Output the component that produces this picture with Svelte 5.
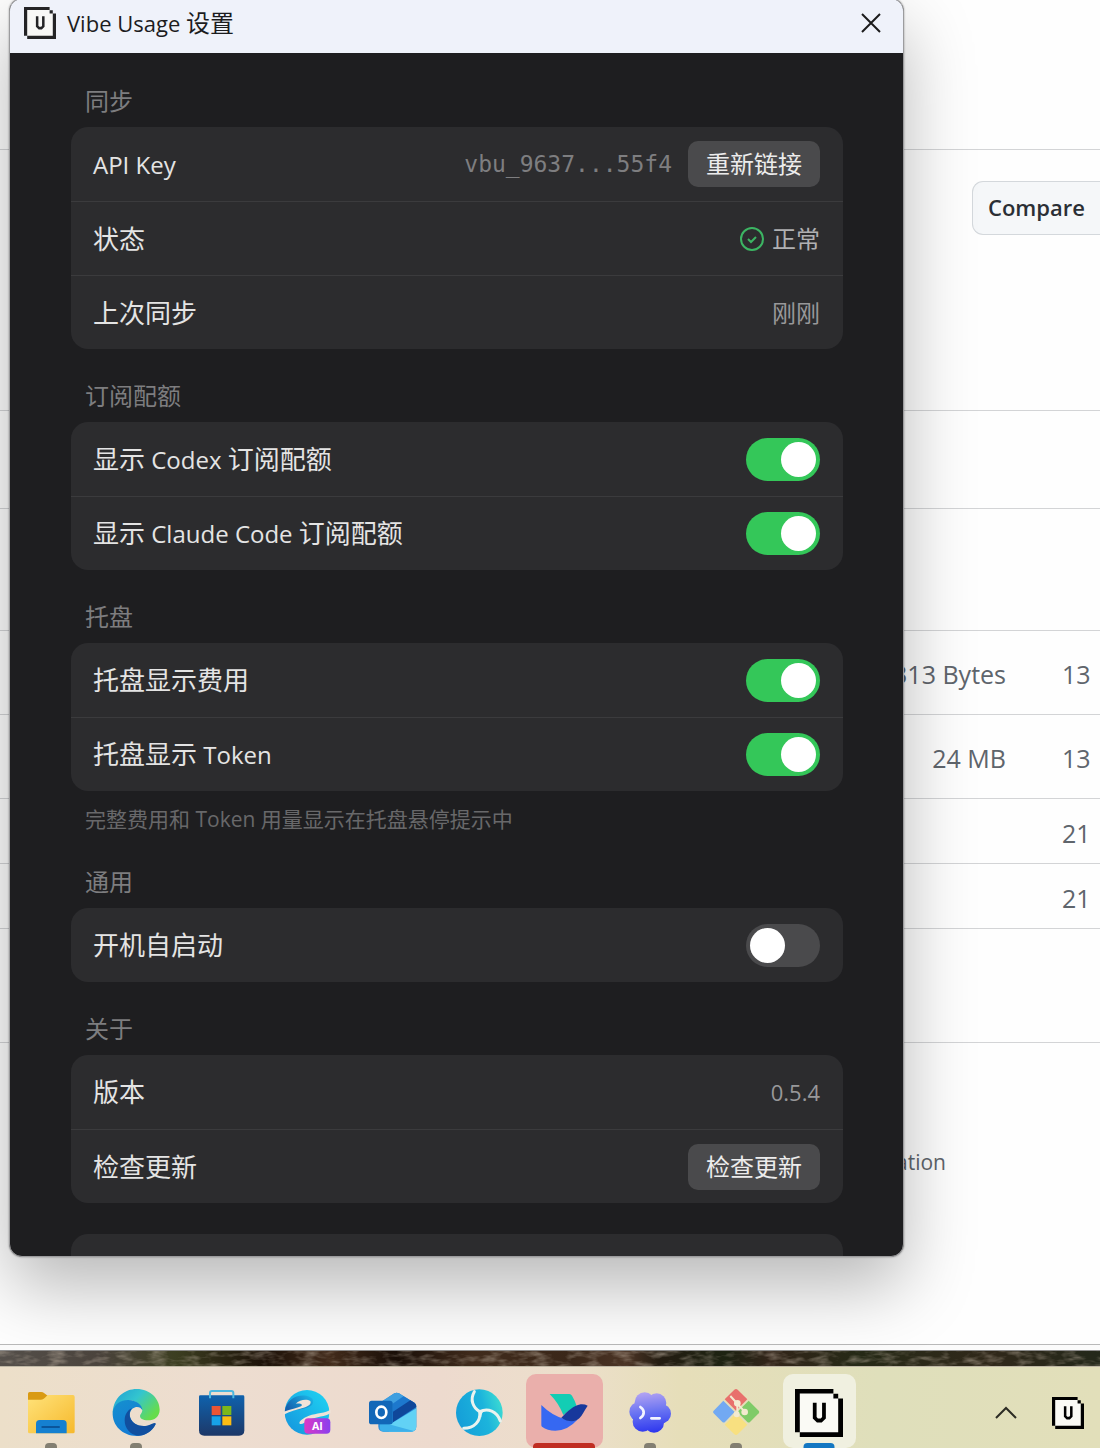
<script>
  const groups = [
    {
      title: '同步',
      rows: [
        { label: 'API Key', kind: 'key', value: 'vbu_9637...55f4', action: '重新链接' },
        { label: '状态', kind: 'status', value: '正常' },
        { label: '上次同步', kind: 'text', value: '刚刚' },
      ],
    },
    {
      title: '订阅配额',
      rows: [
        { label: '显示 Codex 订阅配额', kind: 'toggle', on: true },
        { label: '显示 Claude Code 订阅配额', kind: 'toggle', on: true },
      ],
    },
    {
      title: '托盘',
      rows: [
        { label: '托盘显示费用', kind: 'toggle', on: true },
        { label: '托盘显示 Token', kind: 'toggle', on: true },
      ],
      hint: '完整费用和 Token 用量显示在托盘悬停提示中',
    },
    { title: '通用', rows: [{ label: '开机自启动', kind: 'toggle', on: false }] },
    {
      title: '关于',
      rows: [
        { label: '版本', kind: 'text', value: '0.5.4' },
        { label: '检查更新', kind: 'action', action: '检查更新' },
      ],
    },
  ];

  // Latin words are set slightly smaller than the Chinese around them.
  const runs = (text) =>
    text
      .split(/([\x20-\x7e]+)/)
      .filter(Boolean)
      .map((t) => ({ t, latin: /^[\x20-\x7e]+$/.test(t) }));
</script>

{#snippet mixed(text)}{#each runs(text) as r}<span class:latin={r.latin}>{r.t}</span>{/each}{/snippet}

{#snippet vibe()}
  <svg class="vibe" viewBox="0 0 140 140" aria-hidden="true">
    <path d="M10 10H112V26H126V130H14z" fill="#fafaf5" />
    <path d="M0 0H112V13H14V126H0zM112 14H126V28H112zM126 28H140V140H14V126H126z" />
    <path d="M52 40H63V82L67 86H75L79 82V40H90V86L78 98H64L52 86z" />
  </svg>
{/snippet}

<div class="desktop">
  <main class="page">
    <div class="band b1"></div>
    <div class="band b2"><button class="compare">Compare</button></div>
    <div class="band b3"></div>
    <div class="band b4"></div>
    <div class="band asset"><span>313 Bytes</span><span>13</span></div>
    <div class="band asset"><span>24 MB</span><span>13</span></div>
    <div class="band asset short"><span></span><span>21</span></div>
    <div class="band asset short"><span></span><span>21</span></div>
    <div class="band b5"></div>
    <div class="foot"><span>ation</span></div>
  </main>
  <div class="frame"></div>
  <div class="wallpaper">
    <svg width="100%" height="100%" aria-hidden="true">
      <filter id="grain" x="0" y="0" width="100%" height="100%">
        <feTurbulence type="fractalNoise" baseFrequency="0.06 0.16" numOctaves="3" seed="4" />
        <feColorMatrix values="0 0 0 0 .55  0 0 0 0 .47  0 0 0 0 .38  2.2 0 0 0 -.95" />
      </filter>
      <rect width="100%" height="100%" filter="url(#grain)" />
    </svg>
  </div>

  <nav class="taskbar" aria-label="taskbar">
    <div class="apps">
      <button class="app run" aria-label="File Explorer">
        <svg viewBox="0 0 144 144">
          <defs><linearGradient id="fo" x1="0" y1="0" x2="1" y2="1"><stop offset="0" stop-color="#ffe27a" /><stop offset="1" stop-color="#f6b92c" /></linearGradient></defs>
          <path d="M3 14Q3 9 8 9H42Q48 9 52 13L62 20V34H3z" fill="#d99a13" />
          <path d="M3 32H42Q48 32 53 27L60 20Q62 18 66 18H138Q143 18 143 24V128Q143 133 138 133H8Q3 133 3 128z" fill="url(#fo)" />
          <path d="M27 133V104Q27 93 38 93H108Q119 93 119 104V133z" fill="#1580d0" />
          <path d="M46 114H96" stroke="#0a559b" stroke-width="6" stroke-linecap="round" />
        </svg>
      </button>
      <button class="app run" aria-label="Edge">
        <svg viewBox="0 0 144 144">
          <defs>
            <linearGradient id="e1" x1="0" y1="0" x2="1" y2=".6"><stop offset="0" stop-color="#1f9fd4" /><stop offset=".5" stop-color="#33c5cf" /><stop offset="1" stop-color="#66dc4c" /></linearGradient>
            <linearGradient id="e2" x1="0" y1="0" x2=".6" y2="1"><stop offset="0" stop-color="#1590cf" /><stop offset="1" stop-color="#1378d4" /></linearGradient>
          </defs>
          <path d="M2 70C5 25 38 0 74 0C115 0 143 30 143 62C143 83 127 94 108 94C92 94 84 88 84 81C84 76 91 72 91 64C88 48 70 30 46 34Z" fill="url(#e1)" />
          <path d="M2 70C6 44 28 32 50 33C74 34 91 48 91 64C88 56 80 53 72 54C56 58 51 72 55 86C62 106 84 116 104 112C116 110 126 102 131 106C119 128 98 141 74 141C32 141 0 110 2 70Z" fill="url(#e2)" />
          <path d="M60 57C51 68 51 82 58 93C68 108 88 113 104 110C116 107 125 101 130 102Q132 103 130 107C120 127 99 140 78 140C54 137 38 118 38 94C38 77 46 64 60 57Z" fill="#114f9f" />
        </svg>
      </button>
      <button class="app" aria-label="Store">
        <svg viewBox="0 0 144 144">
          <defs><linearGradient id="st" x1="0" y1="0" x2="0" y2="1"><stop offset="0" stop-color="#0f62ad" /><stop offset="1" stop-color="#1d3868" /></linearGradient></defs>
          <path d="M3 23Q3 19 7 19H135Q139 19 139 23V124Q139 140 123 140H19Q3 140 3 124z" fill="url(#st)" />
          <path d="M36 28V12Q36 6 42 6H100Q106 6 106 12V28" fill="none" stroke="#4cb8e0" stroke-width="6" />
          <path d="M41 51H68V78H41z" fill="#ea5534" /><path d="M73 51H100V78H73z" fill="#7db71b" />
          <path d="M41 82H68V109H41z" fill="#17a2e8" /><path d="M73 82H100V109H73z" fill="#fdbc12" />
        </svg>
      </button>
      <button class="app" aria-label="AI browser">
        <svg viewBox="0 0 144 144">
          <defs><linearGradient id="ai" x1="0" y1="1" x2="1" y2="0"><stop offset="0" stop-color="#1592dc" /><stop offset="1" stop-color="#1fd6f4" /></linearGradient>
          <linearGradient id="ad" x1="0" y1=".6" x2="1" y2="0"><stop offset="0" stop-color="#1461ae" /><stop offset="1" stop-color="#1cbcec" /></linearGradient>
          <linearGradient id="ab"><stop offset="0" stop-color="#dd38c6" /><stop offset="1" stop-color="#8940ee" /></linearGradient></defs>
          <circle cx="72" cy="70" r="67" fill="url(#ai)" />
          <path d="M6 62C12 34 36 16 70 20C92 24 96 40 84 50C62 64 30 60 6 70Z" fill="url(#ad)" />
          <path d="M38 44C50 31 72 29 82 36C86 46 76 52 62 56C40 62 20 66 2 77V68C24 60 42 58 54 52C60 48 56 42 38 44Z" fill="#efe3d8" />
          <path d="M143 62C128 72 100 72 78 80C58 88 46 98 50 104C56 108 66 100 78 93C100 82 128 84 143 72Z" fill="#efe3d8" />
          <rect x="64" y="88" width="78" height="46" rx="12" fill="url(#ab)" />
          <text x="103" y="122" text-anchor="middle" font-size="32" font-weight="700" fill="#fff">AI</text>
        </svg>
      </button>
      <button class="app" aria-label="Outlook">
        <svg viewBox="0 0 144 144">
          <path d="M28 44L76 13Q83 9 90 13L136 41Q142 45 142 52V112Q142 128 126 128H44Q28 128 28 112z" fill="#2788d8" />
          <path d="M28 44L76 13Q83 9 90 13L104 22L48 60H28z" fill="#3f9fe0" />
          <path d="M104 22L136 41Q142 45 142 50L72 96V44z" fill="#1d78cd" />
          <path d="M124 34L136 41Q142 45 142 54L72 100V68z" fill="#0f479a" />
          <path d="M142 58V112Q142 128 126 128H60L56 110z" fill="#62d2f5" />
          <path d="M60 106L134 126Q130 128 126 128H44Q36 128 32 120V106z" fill="#3db0ea" />
          <rect x="0" y="35" width="71" height="71" rx="8" fill="#1267b8" />
          <ellipse cx="37" cy="70" rx="15" ry="17" fill="none" stroke="#fff" stroke-width="8" />
        </svg>
      </button>
      <button class="app" aria-label="Browser">
        <svg viewBox="0 0 144 144">
          <defs><linearGradient id="sw" x1="0" y1=".6" x2="1" y2=".3"><stop offset="0" stop-color="#159ed8" /><stop offset=".6" stop-color="#1cb4dc" /><stop offset="1" stop-color="#3ddcd2" /></linearGradient></defs>
          <circle cx="73" cy="71" r="70" fill="url(#sw)" />
          <path d="M74 68C54 56 44 32 58 8M74 68C98 56 126 66 136 96M74 68C78 96 58 118 26 118" fill="none" stroke="#eaf3ef" stroke-width="9" stroke-linecap="round" />
          <path d="M62 58C70 64 80 64 90 62C82 68 79 76 79 86C75 74 70 66 62 58Z" fill="#eaf3ef" />
        </svg>
      </button>
      <button class="app pinned" aria-label="Feishu">
        <svg viewBox="0 0 144 144">
          <path d="M29 15H88Q93 15 96 20Q106 36 111 54Q90 60 70 78Q56 42 29 15z" fill="#13cdb4" />
          <path d="M4 48Q36 80 74 90Q92 98 112 92Q84 124 46 125Q22 125 6 113Q4 111 4 108z" fill="#3668f2" />
          <path d="M64 86C84 66 100 50 122 46Q134 45 143 50C132 66 128 78 118 88C104 102 82 98 64 86z" fill="#17389c" />
        </svg>
      </button>
      <button class="app run" aria-label="Terminal">
        <svg viewBox="0 0 144 144">
          <defs><linearGradient id="te" gradientUnits="userSpaceOnUse" x1="60" y1="8" x2="76" y2="134"><stop offset="0" stop-color="#b5a5f2" /><stop offset=".5" stop-color="#6671f2" /><stop offset="1" stop-color="#2b34ee" /></linearGradient></defs>
          <g fill="url(#te)"><circle cx="56" cy="40" r="30" /><circle cx="92" cy="42" r="29" /><circle cx="106" cy="74" r="29" /><circle cx="84" cy="101" r="30" /><circle cx="50" cy="98" r="30" /><circle cx="39" cy="68" r="29" /><circle cx="72" cy="71" r="50" /></g>
          <path d="M43 54Q54 62 53 70Q54 78 43 87M76 88H101" fill="none" stroke="#f2f4ff" stroke-width="8" stroke-linecap="round" />
        </svg>
      </button>
      <button class="app run" aria-label="Git">
        <svg viewBox="0 0 144 144">
          <path d="M67 2Q72-2 77 2L106 31L72 65L38 31z" fill="#e8706c" />
          <path d="M34 35L68 69L39 99Q35 102 31 99L5 73Q1 69 5 65z" fill="#72a9f2" />
          <path d="M110 35L140 65Q144 69 140 73L114 99Q110 102 106 99L76 69z" fill="#7fcb68" />
          <path d="M72 73L106 107L77 136Q72 140 67 136L38 107z" fill="#f8e080" />
          <path d="M55 21L98 68M76 44V78" fill="none" stroke="#f3ead0" stroke-width="6" />
          <circle cx="76" cy="43" r="10" fill="#f3ead0" /><circle cx="98" cy="69" r="10" fill="#f3ead0" /><circle cx="74" cy="76" r="9" fill="#f3ead0" />
        </svg>
      </button>
      <button class="app active" aria-label="Vibe Usage">{@render vibe()}</button>
    </div>
    <div class="tray">
      <button class="plain" aria-label="Show hidden icons">
        <svg class="chev" viewBox="0 0 22 14"><path d="M1 12L11 2L21 12" fill="none" stroke="#2c2c24" stroke-width="2" /></svg>
      </button>
      <button class="plain small" aria-label="Vibe Usage tray">{@render vibe()}</button>
    </div>
  </nav>

  <section class="window" aria-label="Vibe Usage 设置">
    <header>
      <div class="small logo">{@render vibe()}</div>
      <h1>{@render mixed('Vibe Usage 设置')}</h1>
      <button class="plain close" aria-label="Close">
        <svg viewBox="0 0 20 20"><path d="M1 1L19 19M19 1L1 19" stroke="#1b1b1b" stroke-width="2" fill="none" /></svg>
      </button>
    </header>
    <div class="body">
      {#each groups as g, gi}
        <section class="group">
          <h2>{g.title}</h2>
          <div class="card">
            {#each g.rows as row, ri}
              <div class="row">
                {#if row.kind === 'toggle'}
                  <label for={`t${gi}-${ri}`}>{@render mixed(row.label)}</label>
                  <input id={`t${gi}-${ri}`} type="checkbox" role="switch" checked={row.on} />
                {:else}
                  <span class="name">{@render mixed(row.label)}</span>
                  {#if row.kind === 'key'}<code>{row.value}</code>{/if}
                  {#if row.kind === 'status'}
                    <span class="value ok">
                      <svg viewBox="0 0 24 24" aria-hidden="true"><circle cx="12" cy="12" r="11" /><path d="M8 12L11 15L16 10" /></svg>
                      {row.value}
                    </span>
                  {/if}
                  {#if row.kind === 'text'}<span class="value">{@render mixed(row.value)}</span>{/if}
                  {#if row.action}<button class="btn">{row.action}</button>{/if}
                {/if}
              </div>
            {/each}
          </div>
          {#if g.hint}<p>{g.hint}</p>{/if}
        </section>
      {/each}
      <div class="card peek"></div>
    </div>
  </section>
</div>

<style>
  :global(body) {
    margin: 0;
    font-family: 'Open Sans', 'Noto Sans CJK SC', sans-serif;
  }
  .desktop {
    position: relative;
    display: flex;
    flex-direction: column;
    min-height: 100vh;
    overflow: hidden;
  }
  button {
    font: inherit;
    border: 0;
    cursor: pointer;
  }
  svg {
    display: block;
    flex: none;
  }

  .page {
    flex: 1;
    background: #fefefe;
    color: #5f656c;
    font-size: 25px;
  }
  .band {
    box-sizing: border-box;
    border-bottom: 1px solid #d3d4d6;
  }
  .b1 { height: 150px; }
  .b2 {
    height: 261px;
    padding-top: 31px;
    display: flex;
    justify-content: flex-end;
    align-items: flex-start;
  }
  .b3 { height: 98px; }
  .b4 { height: 122px; }
  .b5 { height: 114px; }
  .compare {
    width: 128px;
    height: 54px;
    padding: 0 0 2px 15px;
    text-align: left;
    font-size: 22px;
    font-weight: 600;
    color: #2b2f35;
    background: #f5f7f9;
    border: 1px solid #d4d8dc;
    border-right: 0;
    border-radius: 11px 0 0 11px;
  }
  .asset {
    height: 84px;
    display: grid;
    grid-template-columns: 1fr 38px;
    column-gap: 56px;
    align-items: center;
    padding-top: 3px;
  }
  .asset span:first-child { text-align: right; }
  .asset.short { height: 65px; }
  .foot {
    padding: 104px 154px 0 0;
    text-align: right;
    font-size: 21px;
    line-height: 30px;
  }
  .frame {
    height: 5px;
    background: #fbfbfb;
    border-top: 1px solid #b9b9b9;
    border-bottom: 1px solid #8c8c8c;
  }
  .wallpaper {
    height: 15px;
    background: linear-gradient(90deg, #55504b, #4b443d 9%, #3d3f22 16%, #1d1209 24%, #432c1c 30%, #1a0f08 36%, #412c1d 43%, #3b281a 52%, #4c3526 57%, #241d12 60%, #1e2413 66%, #33251a 70%, #262a17 78%, #30281a 90%, #23281a);
  }
  .wallpaper svg { opacity: 0.5; }

  .taskbar {
    display: flex;
    justify-content: space-between;
    height: 74px;
    padding: 7px 16px 0 12px;
    border-top: 1px solid #bfb8a6;
    background: linear-gradient(90deg, #ecdfc9, #edddd0 20%, #eddace 40%, #ecdfcb 52%, #e6deb9 62%, #dfdfbb 80%, #e2dfba);
  }
  .apps {
    flex: 1;
    display: flex;
    justify-content: space-between;
  }
  .app {
    width: 77px;
    height: 74px;
    padding: 4px 0 0;
    display: grid;
    place-items: center;
    position: relative;
    background: none;
    border-radius: 10px;
  }
  .app svg,
  .app :global(svg) {
    width: 48px;
    height: 48px;
  }
  .app text { font-family: 'Open Sans', sans-serif; }
  .app.run::after,
  .app.pinned::after,
  .app.active::after {
    content: '';
    position: absolute;
    bottom: 0;
    left: 50%;
    width: 12px;
    height: 5px;
    transform: translateX(-50%);
    border-radius: 4px 4px 0 0;
    background: #837f72;
  }
  .app.pinned { background: #eaafab; }
  .app.pinned::after { width: 62px; background: #c02d22; }
  .app.active { background: #f0f0e0; width: 73px; }
  .app.active::after { width: 31px; background: #1477c2; }
  .tray {
    width: 228px;
    height: 77px;
    display: flex;
    justify-content: flex-end;
    align-items: center;
    gap: 35px;
  }
  .plain {
    padding: 0;
    background: none;
  }
  .chev { width: 22px; height: 14px; }
  .small :global(svg) { width: 32px; height: 32px; }
  .logo :global(svg) { opacity: 0.85; }

  .window {
    position: absolute;
    top: -2px;
    left: 9px;
    right: 196px;
    border: 1px solid #9c9c9e;
    border-radius: 13px;
    overflow: hidden;
    background: #1e1e20;
    box-shadow: 0 0 2px rgba(0, 0, 0, 0.4), 0 30px 70px rgba(0, 0, 0, 0.28);
  }
  header {
    display: flex;
    align-items: center;
    height: 48px;
    padding: 0 22px 6px 14px;
    background: #eff2fa;
  }
  h1 {
    flex: 1;
    margin: 0 0 0 11px;
    font-size: 24px;
    line-height: 32px;
    font-weight: 400;
    color: #1c1c1e;
  }
  h1 .latin { font-size: 22px; }
  .close svg { width: 20px; height: 20px; }

  .body {
    padding: 32px 60px 0 61px;
    display: flex;
    flex-direction: column;
    gap: 31px;
  }
  h2 {
    margin: 0 0 10px 14px;
    font-size: 24px;
    line-height: 32px;
    font-weight: 400;
    color: #7d7d7f;
  }
  .card {
    border-radius: 17px;
    background: #2c2c2e;
  }
  .row {
    box-sizing: border-box;
    min-height: 74px;
    padding: 0 23px 0 22px;
    display: flex;
    align-items: center;
    font-size: 26px;
    line-height: 36px;
    color: #e4e4e4;
  }
  .row + .row { border-top: 1px solid #3b3b3d; }
  .row label,
  .name { flex: 1; }
  .row .latin { font-size: 24px; }
  .value {
    font-size: 24px;
    color: #98989a;
  }
  .row .value .latin { font-size: 22px; }
  .ok {
    display: flex;
    align-items: center;
    gap: 8px;
    color: #b0b0b2;
  }
  .ok svg {
    width: 24px;
    height: 24px;
    fill: none;
    stroke: #3cb563;
    stroke-width: 2;
  }
  code {
    margin-right: 16px;
    font-family: 'DejaVu Sans Mono', monospace;
    font-size: 23px;
    color: #7e7e80;
  }
  .btn {
    height: 46px;
    padding: 0 18px;
    border-radius: 10px;
    background: #4a4a4c;
    color: #ececec;
    font-size: 24px;
    line-height: 32px;
  }
  input {
    appearance: none;
    box-sizing: border-box;
    width: 74px;
    height: 43px;
    margin: 0;
    padding: 0 4px;
    display: flex;
    align-items: center;
    border-radius: 22px;
    background: #4a4a4c;
    cursor: pointer;
  }
  input::before {
    content: '';
    width: 35px;
    height: 35px;
    border-radius: 50%;
    background: #fff;
  }
  input:checked {
    justify-content: flex-end;
    background: #34c759;
  }
  p {
    margin: 12px 0 0 14px;
    font-size: 21px;
    line-height: 32px;
    color: #68686a;
  }
  .peek {
    height: 22px;
    border-radius: 17px 17px 0 0;
  }
</style>
